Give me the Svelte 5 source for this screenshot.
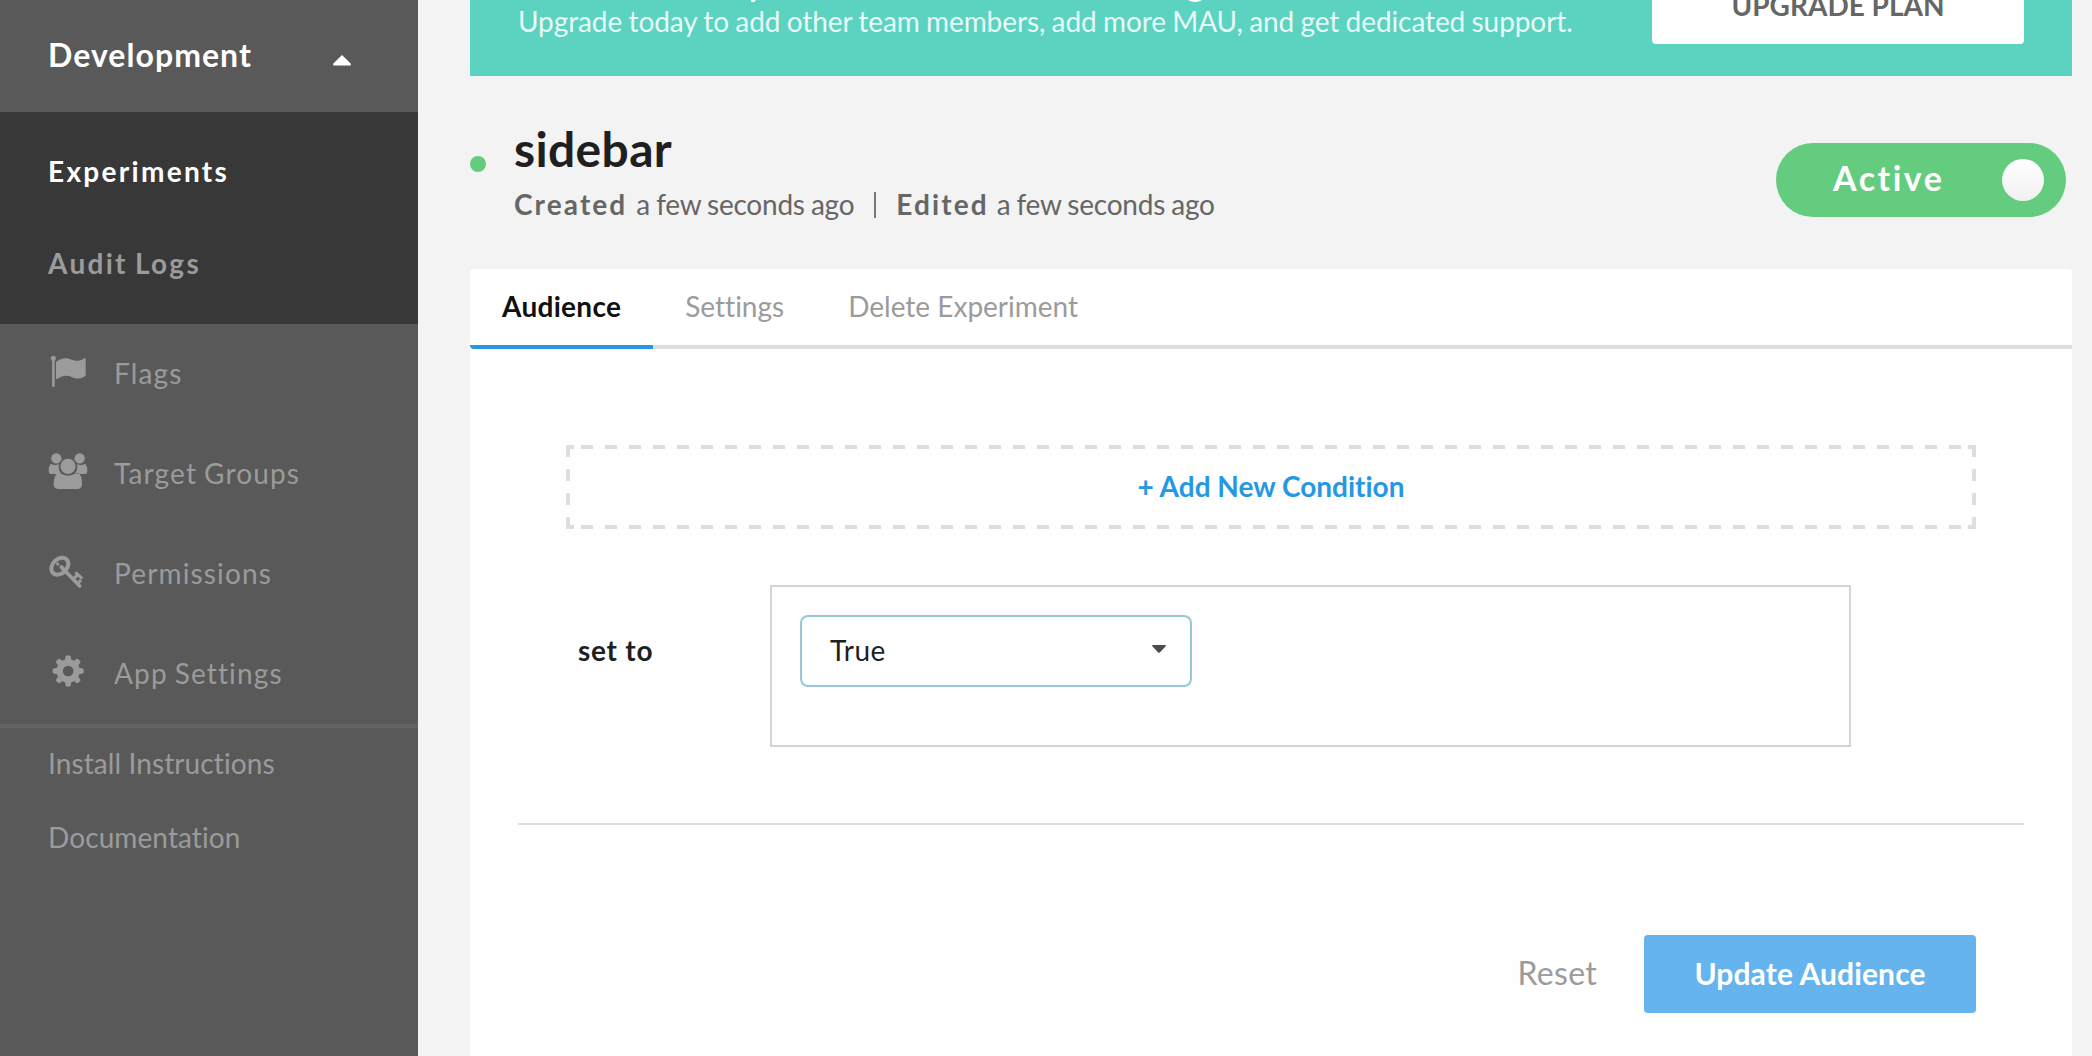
<script>
  const tools = [
    { label: 'Flags', icon: 'flag' },
    { label: 'Target Groups', icon: 'users' },
    { label: 'Permissions', icon: 'key' },
    { label: 'App Settings', icon: 'gear' }
  ];
  const tabs = ['Audience', 'Settings', 'Delete Experiment'];
  const teeth = [0, 45, 90, 135, 180, 225, 270, 315];
</script>

<div class="app">
  <aside class="sidebar">
    <div class="environment">
      <span>Development</span>
      <svg class="caret" width="18" height="11" viewBox="0 0 18 11"><path d="M9 0 17.6 8.6Q18.4 10.6 16.6 10.6H1.4Q-.4 10.6.4 8.6Z" /></svg>
    </div>
    <nav class="primary">
      <a class="current">Experiments</a>
      <a>Audit Logs</a>
    </nav>
    <nav class="tools">
      {#each tools as tool}
        <a>
          {#if tool.icon === 'flag'}
            <svg viewBox="145 69 120 120"><circle cx="161" cy="85" r="7.5" /><path d="M157.500 85h7.500v83q0 3-3.700 3t-3.800-3ZM169 96C184 82 203 82 217 89C231 95 239 93 254 84.500Q258 83 258 87V137C244 147 229 148 216 141C201 134 187 138 174 146Q169 148 169 145Z" /></svg>
          {:else if tool.icon === 'users'}
            <svg viewBox="145 369 120 120"><circle cx="170" cy="385" r="15.500" /><circle cx="240" cy="385" r="15.500" /><circle cx="205" cy="409" r="23" /><path d="M153 401Q169 409 178 401Q174 418 183 428Q178 432 171 432H155Q147 432 147 422Q147 408 153 401ZM257 401Q241 409 232 401Q236 418 227 428Q232 432 239 432H255Q263 432 263 422Q263 408 257 401ZM181 429Q205 446 229 429Q240 427 245 442Q248 454 247 466Q245 477 233 477H177Q163 477 162 466Q161 454 165 442Q170 427 181 429Z" /></svg>
          {:else if tool.icon === 'key'}
            <svg viewBox="145 669 120 120"><ellipse class="ring" cx="180.500" cy="708.500" rx="29" ry="21.500" transform="rotate(-45 180.500 708.500)" /><path class="shaft" d="M185 711 240 768" /><path class="teeth" d="m220 748 12-12m-5-9 21 19m-14 14 10-10" /><circle cx="174" cy="702" r="5" /><circle cx="188" cy="714" r="6" /></svg>
          {:else}
            <svg viewBox="145 969 120 120"><circle class="wheel" cx="205.500" cy="1023" r="25.500" />{#each teeth as angle}<path d="M196 990 198 979Q199 976.500 201 976.500H210Q212 976.500 213 979L215 990Z" transform="rotate({angle} 205.500 1023)" />{/each}</svg>
          {/if}
          <span>{tool.label}</span>
        </a>
      {/each}
    </nav>
    <nav class="help">
      <a>Install Instructions</a>
      <a>Documentation</a>
    </nav>
  </aside>

  <main>
    <section class="banner">
      <svg class="descenders" width="452" height="3" viewBox="0 0 452 3"><path d="M0 0H5L3.500 1.700Q2 2.300 0 1.500ZM437 0H451Q448 2 444 2T437 0Z" /></svg>
      <p>Upgrade today to add other team members, add more MAU, and get dedicated support.</p>
      <button class="upgrade">UPGRADE PLAN</button>
    </section>

    <header>
      <i class="status"></i>
      <div class="heading">
        <h1>sidebar</h1>
        <div class="meta"><b>Created</b><span>a few seconds ago</span><i></i><b class="edited">Edited</b><span>a few seconds ago</span></div>
      </div>
      <button class="toggle"><span>Active</span><i></i></button>
    </header>

    <section class="card">
      <div class="tabs">
        {#each tabs as tab, index}
          <a class:active={index === 0}>{tab}</a>
        {/each}
      </div>
      <div class="body">
        <button class="add">+ Add New Condition</button>
        <div class="rule">
          <strong>set to</strong>
          <div class="value">
            <button class="select"><span>True</span><svg width="14" height="8" viewBox="0 0 14 8"><path d="M1 0H13Q14.500.4 13.500 1.600L7.800 7.500Q7 8.200 6.200 7.500L.500 1.600Q-.500.4 1 0Z" /></svg></button>
          </div>
        </div>
        <hr />
        <div class="actions">
          <button class="reset">Reset</button>
          <button class="update">Update Audience</button>
        </div>
      </div>
    </section>
  </main>
</div>

<style>
  :global(body) { margin: 0; background: #f3f3f3; overflow: hidden; }
  * { box-sizing: border-box; }
  button { font: inherit; border: 0; padding: 0; margin: 0; }
  .app { display: flex; width: 2092px; height: 1056px; overflow: hidden; font: 28px/40px Lato, sans-serif; font-variant-ligatures: none; color: #1f1f1f; white-space: nowrap; }

  .sidebar { width: 418px; height: 1056px; background: #595959; color: #9b9b9b; }
  .environment { height: 112px; padding: 0 67px 2px 48px; display: flex; align-items: center; justify-content: space-between; color: #fff; font-size: 32px; font-weight: 700; letter-spacing: 1.05px; }
  .caret { fill: #fff; margin-top: 11px; }
  .primary { display: flex; flex-direction: column; height: 212px; padding-top: 13px; background: #383838; font-weight: 700; letter-spacing: 2.3px; word-spacing: -2px; }
  .primary a { height: 92px; line-height: 92px; padding-left: 48px; }
  .primary .current { color: #fff; }
  .tools { height: 404px; border-bottom: 4px solid #636363; letter-spacing: 1.15px; word-spacing: -1.4px; }
  .tools a { display: flex; height: 100px; padding: 0 0 0 48px; }
  .tools svg { width: 40px; height: 40px; margin-top: 29px; fill: #9b9b9b; }
  .tools a span { margin: 29px 0 0 26px; }
  .tools .ring { fill: none; stroke: #9b9b9b; stroke-width: 12; }
  .tools .shaft { stroke: #9b9b9b; stroke-width: 11; stroke-linecap: round; }
  .tools .teeth { fill: none; stroke: #9b9b9b; stroke-width: 9; }
  .tools .wheel { fill: none; stroke: #9b9b9b; stroke-width: 19; }
  .help { display: flex; flex-direction: column; margin-top: -2px; padding: 0 48px; letter-spacing: .1px; }
  .help a { height: 74px; line-height: 74px; }

  main { width: 1602px; margin-left: 52px; }
  .banner { position: relative; display: flex; justify-content: space-between; height: 76px; padding: 0 48px; background: #5bd3c0; color: #e8faf7; }
  /* tails of the scrolled-off heading line */
  .descenders { position: absolute; top: 0; left: 281px; fill: #fff; }
  .banner p { margin: 1px 0 0; word-spacing: -.7px; letter-spacing: -.09px; }
  .upgrade { width: 372px; height: 76px; margin-top: -32px; padding-bottom: 2px; background: #fff; color: #666; border-radius: 4px; font-weight: 700; }
  header { display: flex; height: 193px; }
  .status { width: 16px; height: 16px; margin-top: 80px; border-radius: 50%; background: #64cc7e; }
  .heading { margin-left: 28px; flex: 1; }
  h1 { margin: 43px 0 0; font-size: 48px; line-height: 60px; font-weight: 700; letter-spacing: .35px; }
  .meta { display: flex; align-items: center; margin-top: 5px; height: 40px; color: #666; }
  .meta span { word-spacing: -.8px; letter-spacing: -.23px; }
  .meta b { letter-spacing: 2.1px; margin-right: 9px; }
  .meta .edited { margin-right: 8px; }
  .meta i { width: 2px; height: 26px; margin: 2px 20px 0; background: #777; }
  .toggle { display: flex; align-items: center; justify-content: space-between; width: 290px; height: 74px; margin: 67px 6px 0 0; padding: 0 22px 0 57px; border-radius: 37px; background: #64cc7e; color: #fff; font-size: 34px; font-weight: 700; letter-spacing: 2.5px; }
  .toggle span { padding-bottom: 4px; }
  .toggle i { width: 42px; height: 42px; border-radius: 50%; background: linear-gradient(#fff, #f1f1f1); }

  .card { height: 800px; background: #fefefe; border-radius: 4px; }
  .tabs { display: flex; height: 80px; border-bottom: 4px solid #dedede; background: #fff; border-radius: 4px 4px 0 4px; color: #9b9b9b; }
  .tabs a { height: 80px; padding: 0 32px; line-height: 74px; border-bottom: 4px solid transparent; }
  .tabs .active { border-color: #2698e2; border-bottom-left-radius: 4px; color: #111; font-weight: 700; letter-spacing: .3px; }
  .body { padding: 96px 48px 0; }
  .add {
    --dash: #dedede;
    display: block; width: 1410px; height: 84px; margin: 0 48px; padding-bottom: 2px; color: #2698e2; font-weight: 700;
    background:
      linear-gradient(var(--dash), var(--dash)) 0 0 / 8px 4px no-repeat,
      linear-gradient(var(--dash), var(--dash)) 100% 0 / 8px 4px no-repeat,
      linear-gradient(var(--dash), var(--dash)) 0 100% / 8px 4px no-repeat,
      linear-gradient(var(--dash), var(--dash)) 100% 100% / 8px 4px no-repeat,
      linear-gradient(90deg, var(--dash) 12px, transparent 12px) 15px 0 / 24px 4px repeat-x,
      linear-gradient(90deg, var(--dash) 12px, transparent 12px) 15px 100% / 24px 4px repeat-x,
      linear-gradient(var(--dash) 12px, transparent 12px) 0 0 / 4px 24px repeat-y,
      linear-gradient(var(--dash) 12px, transparent 12px) 100% 0 / 4px 24px repeat-y;
  }
  .rule { display: flex; align-items: flex-start; margin: 56px 0 76px 60px; }
  .rule strong { width: 192px; padding-top: 45px; letter-spacing: .75px; }
  .value { width: 1081px; height: 162px; padding: 28px; border: 2px solid #d4d4d4; }
  .select { display: flex; align-items: center; justify-content: space-between; width: 392px; height: 72px; padding: 0 24px 0 28px; border: 2px solid #96c8da; border-radius: 8px; background: #fff; color: #1f1f1f; }
  .select span { padding-bottom: 2px; letter-spacing: .4px; }
  .select svg { fill: #4c4c4c; margin-top: -4px; }
  hr { height: 2px; margin: 0; border: 0; background: #dedede; }
  .actions { display: flex; justify-content: flex-end; align-items: center; margin: 110px 48px 0; height: 78px; }
  .reset { margin-right: 47px; padding-bottom: 2px; background: none; color: #9b9b9b; font-size: 32px; letter-spacing: .3px; }
  .update { width: 332px; height: 78px; padding-bottom: 2px; border-radius: 4px; background: #65b4ed; color: #fff; font-size: 30px; font-weight: 700; letter-spacing: .12px; }
</style>
